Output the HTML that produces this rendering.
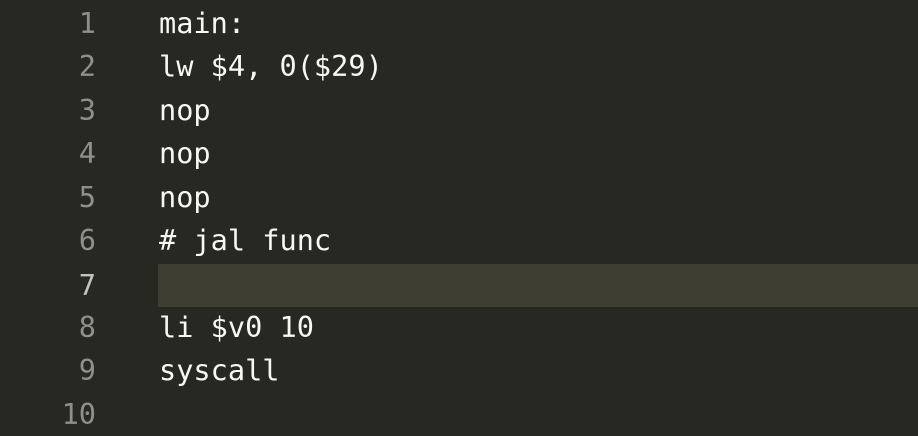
<!DOCTYPE html>
<html><head><style>
html,body{margin:0;padding:0;background:#272822;width:918px;height:432px;overflow:hidden}
.l{position:absolute;left:0;width:918px;height:43.4px;line-height:43.4px;font-family:"DejaVu Sans Mono","Liberation Mono",monospace;font-size:28.6px}
.n{position:absolute;right:822px;color:#8f908a;text-align:right}
.c{position:absolute;left:159px;color:#f8f8f2;white-space:pre}
.cur .n{color:#c2c2bf}
.cur .c{left:158px;right:0;background:#3e3d32;height:43.4px}
</style></head><body>
<div class="l" style="top:2px"><span class="n">1</span><span class="c">main:</span></div>
<div class="l" style="top:45.4px"><span class="n">2</span><span class="c">lw $4, 0($29)</span></div>
<div class="l" style="top:88.8px"><span class="n">3</span><span class="c">nop</span></div>
<div class="l" style="top:132.2px"><span class="n">4</span><span class="c">nop</span></div>
<div class="l" style="top:175.6px"><span class="n">5</span><span class="c">nop</span></div>
<div class="l" style="top:219px"><span class="n">6</span><span class="c"># jal func</span></div>
<div class="l cur" style="top:264px"><span class="n">7</span><span class="c"></span></div>
<div class="l" style="top:306px"><span class="n">8</span><span class="c">li $v0 10</span></div>
<div class="l" style="top:349.4px"><span class="n">9</span><span class="c">syscall</span></div>
<div class="l" style="top:392.8px"><span class="n">10</span><span class="c"></span></div>
</body></html>
